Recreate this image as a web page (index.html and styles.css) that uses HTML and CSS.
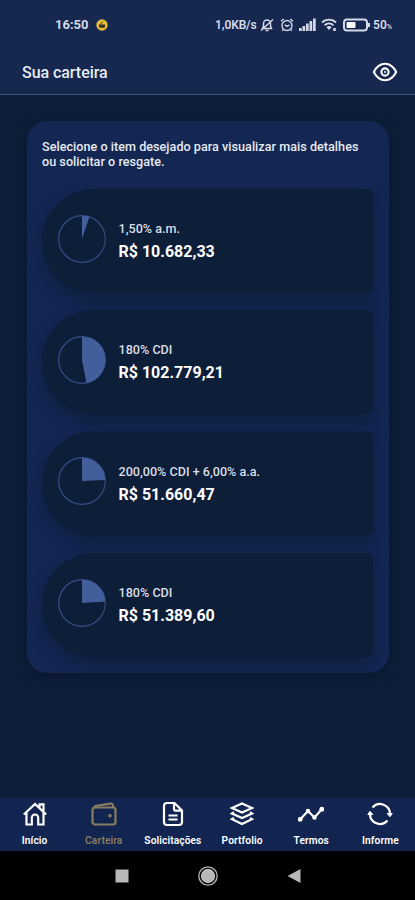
FILE: index.html
```html
<!DOCTYPE html>
<html lang="pt-BR">
<head>
  <meta charset="UTF-8" />
  <meta name="viewport" content="width=device-width, initial-scale=1.0"/>
  <title>Sua carteira</title>
  <link rel="stylesheet" href="styles.css">
</head>
<body>

  <header>
    <div class="status-bar">
      <div class="status-left">
        <span class="clock">16:50</span>
        <svg width="12" height="12" viewBox="0 0 12 12">
          <circle cx="6" cy="6" r="5.7" fill="#e5bd35"/>
          <path d="M3 5.5h6v2.2a1 1 0 0 1-1 1H4a1 1 0 0 1-1-1z" fill="#3a3222"/>
          <path d="M4.2 5.3 6.8 2.8" stroke="#3a3222" stroke-width="1"/>
        </svg>
      </div>
      <div class="status-right">
        <span class="speed">1,0KB/s</span>
        <svg class="mute" width="14" height="14" viewBox="0 0 14 14" fill="none" stroke="currentColor" stroke-width="1.5">
          <path d="M2.5 10.5h9L10.5 8V5.5a3.5 3.5 0 0 0-7 0V8zM5.5 12.5h3M1 12.5 13 1.5"/>
        </svg>
        <svg class="alarm" width="14" height="14" viewBox="0 0 14 14" fill="none" stroke="currentColor" stroke-width="1.4">
          <circle cx="7" cy="7.5" r="5"/>
          <path d="M1 3.2 3.6 1M13 3.2 10.4 1M4.7 6.8 7 8.3l2.5-1.5M3.2 11.5l-1 1.3M10.8 11.5l1 1.3"/>
        </svg>
        <svg class="signal" width="17" height="13" viewBox="0 0 17 13" fill="currentColor">
          <path d="M0 10h2.7v3H0zM3.5 8h2.7v5H3.5zM7 5.5h2.7V13H7zM10.5 3h2.7v10h-2.7zM14 .5h2.7V13H14z"/>
        </svg>
        <svg class="wifi" width="17" height="14" viewBox="0 0 17 14" fill="none" stroke="currentColor" stroke-width="1.8">
          <path d="M1 4.5a10 10 0 0 1 14 0M3.5 7.3a6.4 6.4 0 0 1 9 0"/>
          <path d="M5.4 9.2a4 4 0 0 1 5.2 0L8 12z" fill="currentColor" stroke="none"/>
          <path d="M13.5 10v3" stroke-width="2.5"/>
        </svg>
        <svg class="battery" width="28" height="14" viewBox="0 0 28 14">
          <rect x="1" y="1.5" width="23" height="11" rx="3" fill="none" stroke="currentColor" stroke-width="2"/>
          <rect x="3.5" y="4" width="9" height="6" rx="1" fill="#fff"/>
          <path d="M26 5v4" stroke="currentColor" stroke-width="2"/>
        </svg>
        <span class="percent">50<small>%</small></span>
      </div>
    </div>
    <div class="title-bar">
      <h1>Sua carteira</h1>
      <svg width="26" height="20" viewBox="0 0 26 20" fill="none" stroke="#fff" stroke-width="2.1">
        <path d="M1.8 10C4.5 4.7 8.4 1.8 13 1.8S21.5 4.7 24.2 10C21.5 15.3 17.6 18.2 13 18.2S4.5 15.3 1.8 10z" stroke-linejoin="round"/>
        <circle cx="13" cy="10" r="3.6"/>
        <circle cx="13" cy="10" r="1" fill="#fff" stroke="none"/>
      </svg>
    </div>
  </header>

  <main>
    <section class="card">
      <p class="intro">Selecione o item desejado para visualizar mais detalhes ou solicitar o resgate.</p>

      <div class="item">
        <svg class="pie" viewBox="0 0 48 48">
          <circle cx="24" cy="24" r="23.3"/>
          <path d="M24 24V.7A23.3 23.3 0 0 1 31.4 1.9z"/>
        </svg>
        <div class="info">
          <span class="rate">1,50% a.m.</span>
          <strong>R$ 10.682,33</strong>
        </div>
      </div>

      <div class="item">
        <svg class="pie" viewBox="0 0 48 48">
          <circle cx="24" cy="24" r="23.3"/>
          <path d="M24 24V.7A23.3 23.3 0 0 1 28.4 46.9z"/>
        </svg>
        <div class="info">
          <span class="rate">180% CDI</span>
          <strong>R$ 102.779,21</strong>
        </div>
      </div>

      <div class="item">
        <svg class="pie" viewBox="0 0 48 48">
          <circle cx="24" cy="24" r="23.3"/>
          <path d="M24 24V.7A23.3 23.3 0 0 1 47.3 22.9z"/>
        </svg>
        <div class="info">
          <span class="rate">200,00% CDI + 6,00% a.a.</span>
          <strong>R$ 51.660,47</strong>
        </div>
      </div>

      <div class="item">
        <svg class="pie" viewBox="0 0 48 48">
          <circle cx="24" cy="24" r="23.3"/>
          <path d="M24 24V.7A23.3 23.3 0 0 1 47.3 22.5z"/>
        </svg>
        <div class="info">
          <span class="rate">180% CDI</span>
          <strong>R$ 51.389,60</strong>
        </div>
      </div>
    </section>
  </main>

  <nav class="tabs">
    <a class="tab">
      <svg viewBox="0 0 26 26">
        <path d="M1.8 13.5 13 3l11.2 10.5M4.5 11.5v12h5.3v-6.8a3.2 3.2 0 0 1 6.4 0v6.8h5.3v-12M17.5 6.5V3.3h4v7.5"/>
      </svg>
      <span>Início</span>
    </a>
    <a class="tab active">
      <svg viewBox="0 0 26 26">
        <rect x="1.5" y="6.5" width="23" height="17" rx="2.5"/>
        <path d="M2 7.5 4.5 5l15-2.3c1.5-.2 2.5.6 2.5 2v1.8"/>
        <circle cx="19" cy="14.8" r="1.8" fill="currentColor" stroke="none"/>
      </svg>
      <span>Carteira</span>
    </a>
    <a class="tab">
      <svg viewBox="0 0 26 26">
        <path d="M14.5 2H7a3 3 0 0 0-3 3v16a3 3 0 0 0 3 3h12a3 3 0 0 0 3-3V9.5zM14 2.5v5.2a2 2 0 0 0 2 2h5.5M8.5 14.5h9M8.5 18.5h9"/>
      </svg>
      <span>Solicitações</span>
    </a>
    <a class="tab">
      <svg viewBox="0 0 26 26">
        <path d="M13 2.5 23 7 13 11.5 3 7zM5 11.3 3 12.5l10 4.5 10-4.5-2-1.2M5 17l-2 1.2 10 4.8 10-4.8L21 17"/>
      </svg>
      <span>Portfolio</span>
    </a>
    <a class="tab">
      <svg viewBox="0 0 26 26">
        <path d="m2 18.5 8-8.5 6.5 6.5L24 8"/>
        <g fill="currentColor" stroke="none">
          <circle cx="2.2" cy="18.3" r="2.4"/>
          <circle cx="10" cy="10" r="2.2"/>
          <circle cx="16.5" cy="16.5" r="2.2"/>
          <circle cx="23.8" cy="8.2" r="2.4"/>
        </g>
      </svg>
      <span>Termos</span>
    </a>
    <a class="tab">
      <svg viewBox="0 0 26 26">
        <path d="M5.5 6.4A10 10 0 0 1 23 13M20.5 19.6A10 10 0 0 1 3 13"/>
        <path d="m.8 13.5 2.2-3.2 2.8 3.2zM20.2 12.5h5L23 15.7z" fill="currentColor" stroke-width="1"/>
      </svg>
      <span>Informe</span>
    </a>
  </nav>

  <div class="system-bar">
    <svg width="14" height="14" viewBox="0 0 14 14"><path d="M.5.5h13v13H.5z"/></svg>
    <svg width="22" height="22" viewBox="0 0 22 22">
      <circle cx="11" cy="11" r="7.2"/>
      <circle cx="11" cy="11" r="9.2" fill="none" stroke="#b8b8b8" stroke-width="1.3"/>
    </svg>
    <svg width="14" height="16" viewBox="0 0 14 16"><path d="M13.5 1v14L.5 8z"/></svg>
  </div>

</body>
</html>
```
FILE: styles.css
```css
:root {
  --header: #162750;
  --bg: #0d1e39;
  --card: #142652;
  --item: #0d1e39;
  --pie: #425e9b;
  --gold: #877c61;
}

* {
  box-sizing: border-box;
}

body {
  font-family: Roboto, sans-serif;
  margin: 0;
  height: 900px;
  background: var(--bg);
  color: #fff;
  display: flex;
  flex-direction: column;
  overflow: hidden;
}

svg {
  display: block;
  flex: none;
}

header {
  height: 95px;
  background: var(--header);
  border-bottom: 1px solid #43547a;
}

.status-bar {
  height: 49px;
  padding: 0 23px 0 55px;
  display: flex;
  justify-content: space-between;
  align-items: center;
  color: #d3d9e6;
}

.status-left, .status-right {
  display: flex;
  align-items: center;
}

.status-left {
  gap: 7px;
}

.clock {
  font-size: 13px;
  font-weight: 700;
}

.speed {
  font-size: 12px;
  font-weight: 600;
  width: 43px;
  letter-spacing: -0.15px;
  white-space: nowrap;
}

.mute {
  margin-left: 2px;
}

.alarm {
  margin-left: 6px;
}

.signal {
  margin-left: 5px;
}

.wifi {
  margin-left: 5px;
}

.battery {
  margin-left: 5px;
}

.percent {
  font-size: 12px;
  font-weight: 600;
  margin-left: 2px;
}

.percent small {
  font-size: 7px;
}

.title-bar {
  height: 46px;
  padding: 0 17px 0 22px;
  display: flex;
  justify-content: space-between;
  align-items: center;
}

h1 {
  margin: 0;
  font-size: 16px;
  font-weight: 500;
  letter-spacing: -0.05px;
  color: #e6eaf2;
}

main {
  flex: 1;
  padding: 26px 26px 0 27px;
}

.card {
  height: 552px;
  padding: 18px 16px 0 15px;
  border-radius: 20px;
  background: var(--card);
  box-shadow: 0 3px 10px rgba(8, 16, 38, 0.6);
  overflow: hidden;
}

.intro {
  margin: 0 0 19.5px;
  font-size: 12.6px;
  font-weight: 500;
  line-height: 15px;
  height: 30px;
  letter-spacing: 0.03px;
  padding-right: 10px;
  color: #e6eaf2;
}

.item {
  height: 104px;
  margin-bottom: 17.4px;
  padding-left: 16px;
  display: flex;
  align-items: center;
  gap: 12.5px;
  border-radius: 52px 6px 6px 52px;
  background: var(--item);
  box-shadow: 0 7px 14px rgba(13, 30, 57, 0.8);
}

.pie {
  width: 48px;
  height: 48px;
  margin-top: -4px;
}

.pie circle {
  fill: none;
  stroke: #354d83;
  stroke-width: 1.2;
}

.pie path {
  fill: var(--pie);
}

.info {
  display: flex;
  flex-direction: column;
  gap: 5px;
  padding-top: 2px;
}

.rate {
  font-size: 12.6px;
  font-weight: 500;
  line-height: 16px;
  color: #d8dde8;
}

.info strong {
  font-size: 16px;
  font-weight: 700;
  line-height: 20px;
}

.tabs {
  height: 53px;
  background: #122450;
  display: grid;
  grid-template-columns: repeat(6, 1fr);
}

.tab {
  display: flex;
  flex-direction: column;
  align-items: center;
  padding-top: 3px;
  gap: 8px;
  font-size: 10.2px;
  font-weight: 600;
  line-height: 12px;
  color: #fff;
  letter-spacing: 0.1px;
}

.tab svg {
  width: 26px;
  height: 26px;
  fill: none;
  stroke: currentColor;
  stroke-width: 2.2;
}

.tab.active {
  color: var(--gold);
}

.system-bar {
  height: 49px;
  background: #000;
  display: flex;
  justify-content: center;
  align-items: center;
  gap: 68px;
  fill: #b8b8b8;
}
```
